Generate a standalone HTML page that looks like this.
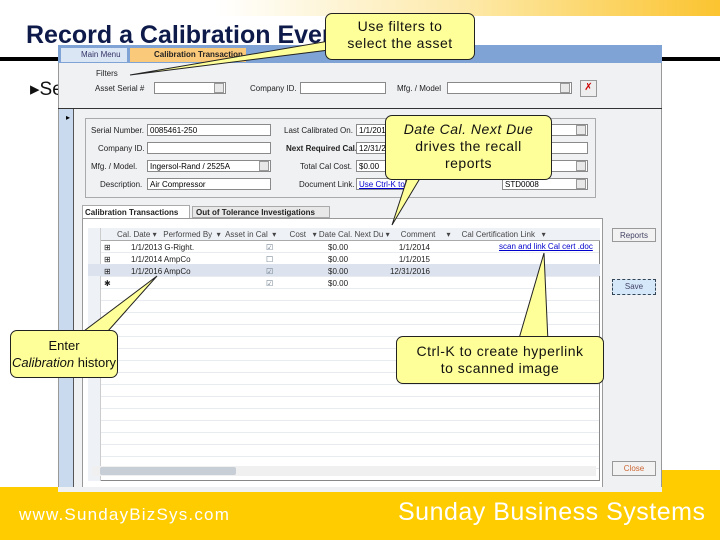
<!DOCTYPE html><html><head><style>
body{margin:0;width:720px;height:540px;position:relative;overflow:hidden;background:#fff;font-family:"Liberation Sans",sans-serif}
.a{position:absolute}
.t{font-size:8px;color:#222;white-space:nowrap}
.in{position:absolute;background:#fff;border:1px solid #8a8a8a;height:12px;font-size:8px;line-height:12px;padding-left:2px;box-sizing:border-box}
.dd{position:absolute;width:10px;height:10px;background:#e8e8e8;border:1px solid #999;box-sizing:border-box}
.call{position:absolute;background:#ffff99;border:1px solid #222;border-radius:7px;text-align:center;font-size:14px;letter-spacing:0.5px;color:#111;box-sizing:border-box}
.btn{position:absolute;background:#f2f2f2;border:1px solid #999;font-size:8px;text-align:center;line-height:13px;color:#446;box-sizing:border-box}
</style></head><body>
<div class="a" style="left:0;top:0;width:720px;height:16px;background:linear-gradient(90deg,#fff 30%,#fde9a8 65%,#fbc430)"></div>
<div class="a" style="left:26px;top:21px;font-size:25px;font-weight:bold;color:#0d1a4a">Record a Calibration Event</div>
<div class="a" style="left:0;top:57px;width:720px;height:4px;background:#000"></div>
<div class="a" style="left:30px;top:78px;font-size:19px;color:#111">&#9656;Se</div>
<!-- window -->
<div class="a" style="left:58px;top:45px;width:604px;height:447px;background:#f0f1f3;border:1px solid #999;box-sizing:border-box"></div>
<div class="a" style="left:58px;top:45px;width:604px;height:18px;background:#7fa3d4"></div>
<div class="a t" style="left:61px;top:48px;width:66px;height:14px;background:#dbe6f4;color:#336;line-height:14px;padding-left:20px;box-sizing:border-box">Main Menu</div>
<div class="a t" style="left:130px;top:48px;width:116px;height:14px;background:#fbc97a;line-height:14px;padding-left:24px;box-sizing:border-box;font-weight:bold">Calibration Transaction</div>
<div class="a t" style="left:96px;top:69px">Filters</div>
<div class="a t" style="left:95px;top:84px">Asset Serial #</div>
<div class="in" style="left:154px;top:82px;width:72px"></div><div class="dd" style="left:214px;top:83px"></div>
<div class="a t" style="left:250px;top:84px">Company ID.</div>
<div class="in" style="left:300px;top:82px;width:86px"></div>
<div class="a t" style="left:397px;top:84px">Mfg. / Model</div>
<div class="in" style="left:447px;top:82px;width:125px"></div><div class="dd" style="left:560px;top:83px"></div>
<div class="a" style="left:580px;top:80px;width:15px;height:15px;background:#eee;border:1px solid #999;color:#c00;font-size:10px;text-align:center;line-height:14px">&#10007;</div>
<div class="a" style="left:58px;top:108px;width:604px;height:1px;background:#333"></div>
<div class="a" style="left:59px;top:109px;width:14px;height:383px;background:#c9d9ee"></div>
<div class="a" style="left:73px;top:109px;width:1px;height:383px;background:#555"></div>
<div class="a" style="left:66px;top:113px;font-size:8px">&#9656;</div>
<div class="a" style="left:85px;top:118px;width:511px;height:80px;border:1px solid #aaa;box-sizing:border-box"></div>
<div class="a t" style="left:91px;top:126px">Serial Number.</div><div class="in" style="left:147px;top:124px;width:124px">0085461-250</div>
<div class="a t" style="left:98px;top:144px">Company ID.</div><div class="in" style="left:147px;top:142px;width:124px"></div>
<div class="a t" style="left:91px;top:162px">Mfg. / Model.</div><div class="in" style="left:147px;top:160px;width:124px">Ingersol-Rand / 2525A</div><div class="dd" style="left:259px;top:161px"></div>
<div class="a t" style="left:100px;top:180px">Description.</div><div class="in" style="left:147px;top:178px;width:124px">Air Compressor</div>
<div class="a t" style="left:284px;top:126px">Last Calibrated On.</div><div class="in" style="left:356px;top:124px;width:232px">1/1/2016</div>
<div class="a t" style="left:286px;top:144px;font-weight:bold">Next Required Cal.</div><div class="in" style="left:356px;top:142px;width:232px">12/31/2016</div>
<div class="a t" style="left:300px;top:162px">Total Cal Cost.</div><div class="in" style="left:356px;top:160px;width:232px">$0.00</div>
<div class="a t" style="left:299px;top:180px">Document Link.</div><div class="in" style="left:356px;top:178px;width:50px;color:#00c;text-decoration:underline">Use Ctrl-K to</div>
<div class="in" style="left:502px;top:178px;width:86px">STD0008</div>
<div class="dd" style="left:576px;top:125px"></div><div class="dd" style="left:576px;top:161px"></div><div class="dd" style="left:576px;top:179px"></div>
<!-- tabs -->
<div class="a t" style="left:82px;top:205px;width:108px;height:13px;background:#fff;border:1px solid #aaa;border-bottom:none;font-weight:bold;padding:2px;box-sizing:border-box">Calibration Transactions</div>
<div class="a t" style="left:192px;top:206px;width:138px;height:12px;background:#e8e8e8;border:1px solid #aaa;font-weight:bold;padding:1px 3px;box-sizing:border-box">Out of Tolerance Investigations</div>
<div class="a" style="left:82px;top:218px;width:521px;height:273px;background:#fff;border:1px solid #999;box-sizing:border-box"></div>
<div class="a" style="left:88px;top:228px;width:512px;height:253px;border:1px solid #888;box-sizing:border-box;background:repeating-linear-gradient(#fff 0,#fff 11px,#e8ebef 11px,#e8ebef 12px)"></div>
<div class="a" style="left:88px;top:228px;width:512px;height:12px;background:#eef1f6;border-bottom:1px solid #aaa"></div>
<div class="a" style="left:88px;top:228px;width:12px;height:253px;background:#eef1f6;border-right:1px solid #ccc"></div>
<div class="a" style="left:88px;top:264px;width:512px;height:12px;background:#dde3ee"></div>
<div class="a t" style="left:117px;top:230px;color:#444">Cal. Date ▾ &nbsp; Performed By &nbsp;▾ &nbsp;Asset in Cal &nbsp;▾ &nbsp; &nbsp; &nbsp;Cost &nbsp; ▾ Date Cal. Next Du ▾ &nbsp; &nbsp; Comment &nbsp; &nbsp; ▾ &nbsp; &nbsp; Cal Certification Link &nbsp; ▾</div>
<div class="a t" style="left:104px;top:242px;line-height:12px">⊞<br>⊞<br>⊞<br>✱</div>
<div class="a t" style="left:131px;top:242px;line-height:12px">1/1/2013 G-Right.<br>1/1/2014 AmpCo<br>1/1/2016 AmpCo</div>
<div class="a t" style="left:266px;top:242px;line-height:12px;color:#678">☑<br>☐<br>☑<br>☑</div>
<div class="a t" style="left:328px;top:242px;line-height:12px">$0.00<br>$0.00<br>$0.00<br>$0.00</div>
<div class="a t" style="left:378px;top:242px;line-height:12px;text-align:right;width:52px">1/1/2014<br>1/1/2015<br>12/31/2016</div>
<div class="a t" style="left:499px;top:242px;color:#00c;text-decoration:underline">scan and link Cal cert .doc</div>
<div class="a" style="left:92px;top:466px;width:504px;height:10px;background:#f0f0f0"></div>
<div class="a" style="left:100px;top:467px;width:136px;height:8px;background:#c8ced6;border-radius:2px"></div>
<div class="btn" style="left:612px;top:228px;width:44px;height:14px">Reports</div>
<div class="btn" style="left:612px;top:279px;width:44px;height:16px;background:#d4e8fa;border:1px dashed #345;line-height:14px">Save</div>
<div class="btn" style="left:612px;top:461px;width:44px;height:15px;color:#c63">Close</div>
<!-- footer -->
<div class="a" style="left:0;top:487px;width:720px;height:53px;background:#ffcc00"></div>
<div class="a" style="left:662px;top:470px;width:58px;height:20px;background:#ffcc00"></div>
<div class="a" style="left:58px;top:487px;width:604px;height:5px;background:#f0f1f3"></div>
<div class="a" style="left:19px;top:505px;font-size:17px;color:#fff;letter-spacing:1.2px">www.SundayBizSys.com</div>
<div class="a" style="left:398px;top:498px;font-size:25px;color:#fff;letter-spacing:0.5px">Sunday Business Systems</div>
<!-- pointers -->
<svg class="a" style="left:0;top:0" width="720" height="540">
<polygon points="335,40 345,48 130,75" fill="#ffff99" stroke="#222" stroke-width="1"/>
<polygon points="410,170 425,170 392,225" fill="#ffff99" stroke="#222"/>
<polygon points="72,340 100,340 157,276" fill="#ffff99" stroke="#222"/>
<polygon points="518,342 548,342 544,253" fill="#ffff99" stroke="#222"/>
</svg>
<div class="call" style="left:325px;top:13px;width:150px;height:47px;padding-top:4px;line-height:17px">Use filters to<br>select the asset</div>
<div class="call" style="left:385px;top:115px;width:167px;height:65px;padding-top:5px;line-height:17px"><i>Date Cal. Next Due</i><br>drives the recall<br>reports</div>
<div class="call" style="left:10px;top:330px;width:108px;height:48px;padding-top:6px;line-height:17px;letter-spacing:0;font-size:13px;white-space:nowrap">Enter<br><i>Calibration</i> history</div>
<div class="call" style="left:396px;top:336px;width:208px;height:48px;padding-top:6px;line-height:17px">Ctrl-K to create hyperlink<br>to scanned image</div>
</body></html>
